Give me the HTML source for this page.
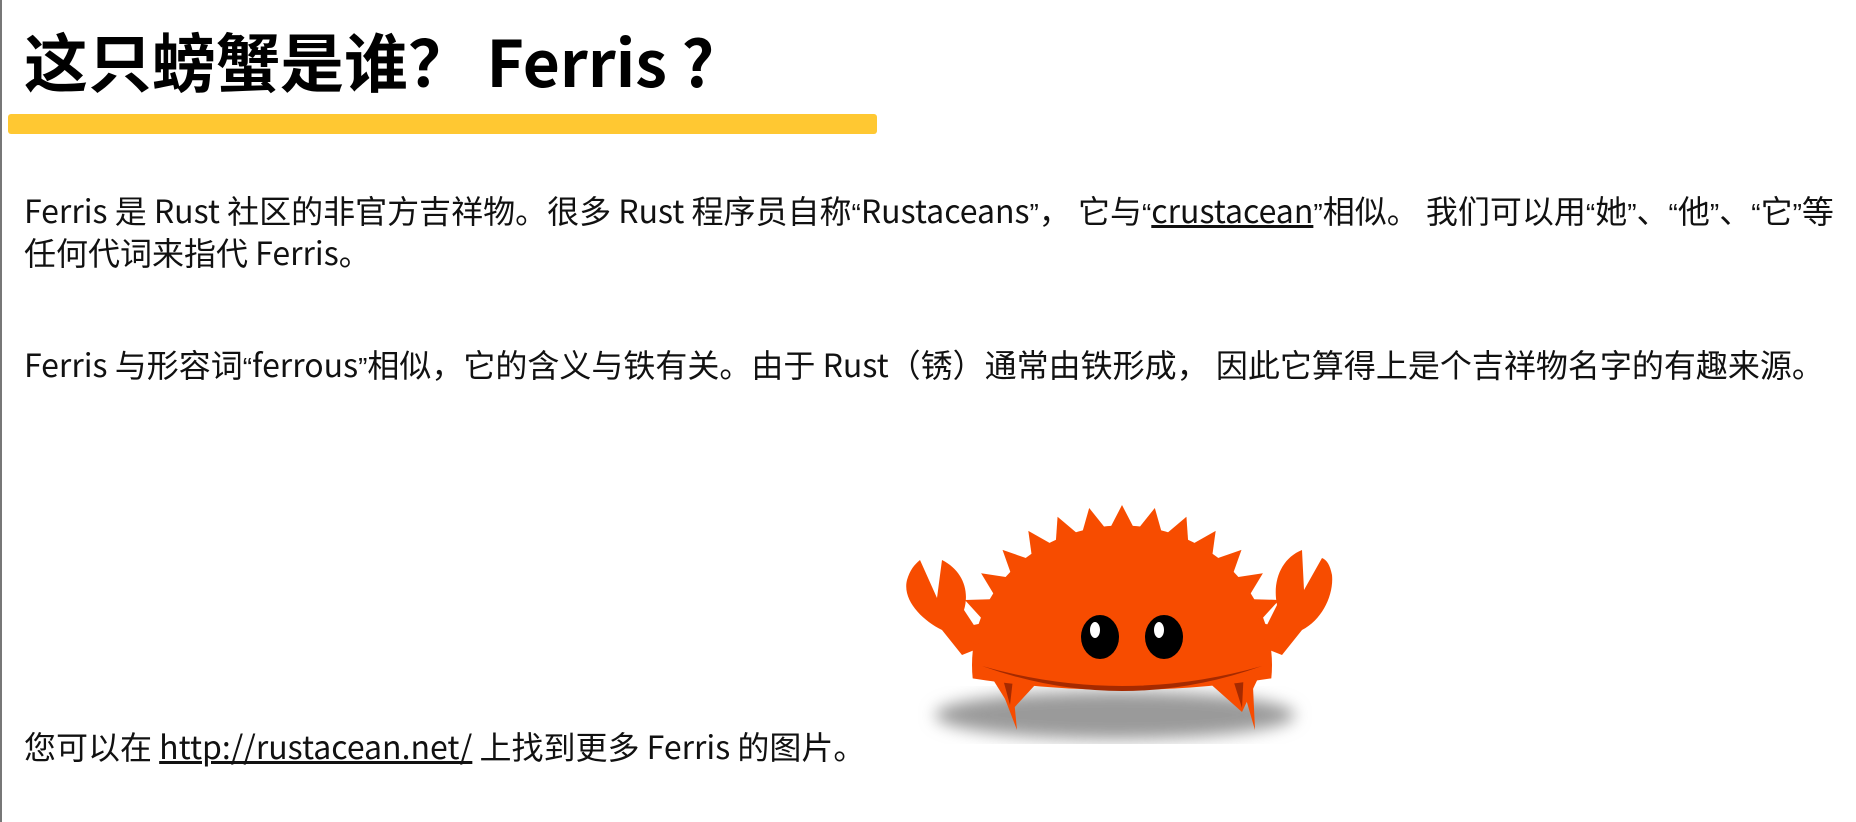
<!DOCTYPE html>
<html><head><meta charset="utf-8"><style>
html,body{margin:0;padding:0;background:#fff;width:1856px;height:822px;overflow:hidden;position:relative}
body{border-left:2px solid #777;box-sizing:border-box;font-family:"Noto Sans CJK SC","Liberation Sans",sans-serif;color:#111}
h1{position:absolute;left:22px;top:22px;margin:0;font-size:64px;font-weight:700;line-height:1.2;white-space:nowrap;color:#000}
.bar{position:absolute;left:6px;top:114px;width:869px;height:20px;background:#ffc832;border-radius:3px}
p{position:absolute;left:22px;margin:0;font-size:32px;line-height:39px;white-space:nowrap}
.q{font-family:"Liberation Sans",sans-serif;font-size:28px}
a{color:#111;text-decoration:underline}
</style></head><body>
<h1>这只螃蟹是谁？ Ferris ?</h1>
<div class="bar"></div>
<p style="top:191px">Ferris 是 Rust 社区的非官方吉祥物。很多 Rust 程序员自称<span class="q">“</span>Rustaceans<span class="q">”</span>， 它与<span class="q">“</span><a>crustacean</a><span class="q">”</span>相似。 我们可以用<span class="q">“</span>她<span class="q">”</span>、<span class="q">“</span>他<span class="q">”</span>、<span class="q">“</span>它<span class="q">”</span>等<br>任何代词来指代 Ferris。</p>
<p style="top:345px">Ferris 与形容词<span class="q">“</span>ferrous<span class="q">”</span>相似，它的含义与铁有关。由于 Rust（锈）通常由铁形成， 因此它算得上是个吉祥物名字的有趣来源。</p>
<p style="top:727px">您可以在 <a>http://rustacean.net/</a> 上找到更多 Ferris 的图片。</p>
<svg style="position:absolute;left:880px;top:480px" width="480" height="300" viewBox="0 0 480 300">
<defs><filter id="b"><feGaussianBlur stdDeviation="8"/></filter>
<clipPath id="c"><path d="M0,0 H480 V180 Q240 240 0 180 Z"/></clipPath></defs>
<ellipse cx="233" cy="235" rx="180" ry="24" fill="#9a9a9a" filter="url(#b)"/>
<polygon points="110,185 128,178 135,250" fill="#f74c00"/>
<polygon points="150,195 165,192 130,230 105,190" fill="#f74c00"/>
<polygon points="118,188 132,190 128,225" fill="#a52a00"/>
<polygon points="370,185 352,178 373,250" fill="#f74c00"/>
<polygon points="330,195 315,192 360,232 380,190" fill="#f74c00"/>
<polygon points="362,188 348,190 360,228" fill="#a52a00"/>
<path d="M80,175 L60,150 C40,140 20,120 25,100 C28,90 32,85 38,80 L55,118 L60,80 C80,90 88,110 82,130 L105,165 Z" fill="#f74c00"/>
<path d="M400,175 L420,150 C440,140 452,115 450,95 C448,85 445,80 440,78 L422,110 L420,70 C400,78 390,100 395,125 L375,165 Z" fill="#f74c00"/>
<g clip-path="url(#c)">
<g transform="translate(240,185) scale(1,0.93)" fill="#f74c00">
<circle r="150"/>
<polygon points="-13,-145 0,-172 13,-145" transform="rotate(0)"/>
<polygon points="-13,-145 0,-172 13,-145" transform="rotate(11)"/>
<polygon points="-13,-145 0,-172 13,-145" transform="rotate(22)"/>
<polygon points="-13,-145 0,-172 13,-145" transform="rotate(33)"/>
<polygon points="-13,-145 0,-172 13,-145" transform="rotate(44)"/>
<polygon points="-13,-145 0,-172 13,-145" transform="rotate(55)"/>
<polygon points="-13,-145 0,-172 13,-145" transform="rotate(66)"/>
<polygon points="-13,-145 0,-172 13,-145" transform="rotate(77)"/>
<polygon points="-13,-145 0,-172 13,-145" transform="rotate(-11)"/>
<polygon points="-13,-145 0,-172 13,-145" transform="rotate(-22)"/>
<polygon points="-13,-145 0,-172 13,-145" transform="rotate(-33)"/>
<polygon points="-13,-145 0,-172 13,-145" transform="rotate(-44)"/>
<polygon points="-13,-145 0,-172 13,-145" transform="rotate(-55)"/>
<polygon points="-13,-145 0,-172 13,-145" transform="rotate(-66)"/>
<polygon points="-13,-145 0,-172 13,-145" transform="rotate(-77)"/>
</g></g>
<path d="M100,186 Q240 236 380 186 Q240 226 100 186 Z" fill="#a52a00"/>
<ellipse cx="218" cy="157" rx="19" ry="22" fill="#000"/>
<ellipse cx="282" cy="157" rx="19" ry="22" fill="#000"/>
<ellipse cx="213" cy="150" rx="5" ry="8" fill="#fff"/>
<ellipse cx="277" cy="150" rx="5" ry="8" fill="#fff"/>
</svg>
</body></html>
